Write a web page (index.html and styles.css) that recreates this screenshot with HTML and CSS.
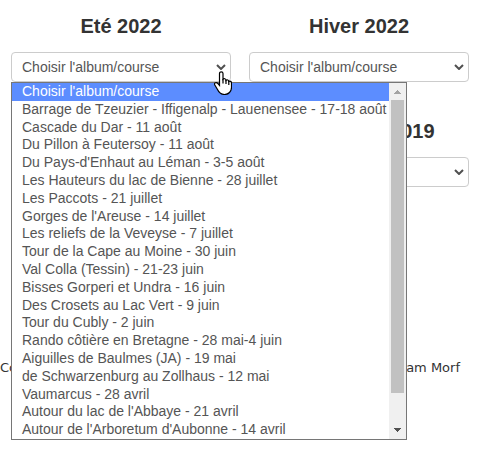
FILE: index.html
```html
<!DOCTYPE html>
<html lang="fr">
<head>
<meta charset="utf-8">
<title>Albums des courses</title>
<link rel="stylesheet" href="styles.css">
</head>
<body>
<main class="seasons">
  <section class="season">
    <h2><label for="ete-2022">Eté 2022</label></h2>
    <div class="picker">
      <select id="ete-2022"><option>Choisir l'album/course</option></select>
      <svg class="chevron" viewBox="0 0 10 6" aria-hidden="true"><path d="M1 1l4 4 4-4"/></svg>
      <div class="popup">
        <ul class="options" role="listbox" aria-label="Eté 2022">
          <li class="active" role="option" aria-selected="true">Choisir l'album/course</li>
          <li role="option">Barrage de Tzeuzier - Iffigenalp - Lauenensee - 17-18 août</li>
          <li role="option">Cascade du Dar - 11 août</li>
          <li role="option">Du Pillon à Feutersoy - 11 août</li>
          <li role="option">Du Pays-d'Enhaut au Léman - 3-5 août</li>
          <li role="option">Les Hauteurs du lac de Bienne - 28 juillet</li>
          <li role="option">Les Paccots - 21 juillet</li>
          <li role="option">Gorges de l'Areuse - 14 juillet</li>
          <li role="option">Les reliefs de la Veveyse - 7 juillet</li>
          <li role="option">Tour de la Cape au Moine - 30 juin</li>
          <li role="option">Val Colla (Tessin) - 21-23 juin</li>
          <li role="option">Bisses Gorperi et Undra - 16 juin</li>
          <li role="option">Des Crosets au Lac Vert - 9 juin</li>
          <li role="option">Tour du Cubly - 2 juin</li>
          <li role="option">Rando côtière en Bretagne - 28 mai-4 juin</li>
          <li role="option">Aiguilles de Baulmes (JA) - 19 mai</li>
          <li role="option">de Schwarzenburg au Zollhaus - 12 mai</li>
          <li role="option">Vaumarcus - 28 avril</li>
          <li role="option">Autour du lac de l'Abbaye - 21 avril</li>
          <li role="option">Autour de l'Arboretum d'Aubonne - 14 avril</li>
        </ul>
        <div class="scrollbar" aria-hidden="true">
          <svg class="arrow arrow-up" viewBox="0 0 17 17"><path d="M5 11h7v-1h-1v-1h-1v-1h-1v-1h-1v1h-1v1h-1v1h-1z"/></svg>
          <div class="track"><div class="thumb"></div></div>
          <svg class="arrow" viewBox="0 0 17 17"><path d="M5 6h7v1h-1v1h-1v1h-1v1h-1v-1h-1v-1h-1v-1h-1z"/></svg>
        </div>
      </div>
      <svg class="pointer" viewBox="0 0 18 24" aria-hidden="true">
        <path d="M5.5 2.5C5.5 .2 9 .2 9 2.500V8.200C9.800 7.300 12 7.500 12 9.300C13 8.400 14.800 8.900 14.800 10.400C16 9.700 17.500 10.500 17.500 12V16.500C17.500 20.500 14.500 23.500 10.500 23.500C7 23.500 5 21.700 3.500 18.500L.8 14C-.2 12 2.300 10.700 3.700 12.400L5.500 14.500Z"/>
        <path d="M9 8v4.500M12 9v4M14.800 10v4"/>
      </svg>
    </div>
  </section>
  <section class="season">
    <h2><label for="hiver-2022">Hiver 2022</label></h2>
    <div class="picker">
      <select id="hiver-2022"><option>Choisir l'album/course</option></select>
      <svg class="chevron" viewBox="0 0 10 6" aria-hidden="true"><path d="M1 1l4 4 4-4"/></svg>
    </div>
  </section>
  <section class="season season-right">
    <h2><label for="hiver-2019">Hiver 2018-2019</label></h2>
    <div class="picker">
      <select id="hiver-2019"><option>Choisir l'album/course</option></select>
      <svg class="chevron" viewBox="0 0 10 6" aria-hidden="true"><path d="M1 1l4 4 4-4"/></svg>
    </div>
  </section>
</main>
<footer class="credits"><span>Co</span><span>am Morf</span></footer>
</body>
</html>
```

FILE: styles.css
```css
* {
  box-sizing: border-box;
}

body {
  min-height: 100vh;
  margin: 0;
  background: #fff;
  color: #333;
  font-family: "Liberation Sans", Arial, sans-serif;
  font-size: 14px;
}

.seasons {
  display: grid;
  grid-template-columns: 1fr 1fr;
  gap: 37px 18px;
  padding: 14px 16px 0 11px;
}

.season-right {
  grid-column: 2;
}

.season h2 {
  margin: 0 0 14px;
  font-size: 20px;
  line-height: 24px;
  text-align: center;
}

.picker {
  position: relative;
}

.picker select {
  display: block;
  width: 100%;
  height: 30px;
  padding: 0 10px;
  appearance: none;
  border: 1px solid #ccc;
  border-radius: 4px;
  background: #fff;
  color: #555;
  font: inherit;
}

.chevron {
  position: absolute;
  top: 12px;
  right: 5px;
  width: 10px;
  height: 6px;
  fill: none;
  stroke: #505050;
  stroke-width: 2;
}

.popup {
  position: absolute;
  z-index: 1;
  top: 30px;
  left: 0;
  display: flex;
  width: max-content;
  height: 358px;
  border: 1px solid #767676;
  background: #fff;
}

.options {
  display: grid;
  grid-template-rows: repeat(20, 1fr);
  margin: 0;
  padding: 0;
  list-style: none;
  color: #555;
  line-height: 17px;
  white-space: nowrap;
}

.options li {
  padding: 0 2px 0 10px;
}

.options .active {
  background: #5c8dff;
  color: #fff;
}

.scrollbar {
  display: flex;
  flex-direction: column;
  width: 17px;
  background: #f0f0f0;
}

.arrow {
  width: 17px;
  height: 17px;
  fill: #505050;
}

.arrow-up {
  fill: #a3a3a3;
}

.track {
  flex: 1;
  padding: 0 2px;
}

.thumb {
  height: 91%;
  background: #c1c1c1;
}

.pointer {
  position: absolute;
  z-index: 2;
  top: 19px;
  right: -1px;
  width: 18px;
  height: 24px;
  fill: #fff;
  stroke: #000;
  stroke-width: 1.2;
}

.credits {
  display: flex;
  justify-content: space-between;
  margin-top: 171px;
  padding-right: 25px;
  font-family: "DejaVu Sans", Verdana, sans-serif;
  font-size: 13px;
  line-height: 20px;
}
```
